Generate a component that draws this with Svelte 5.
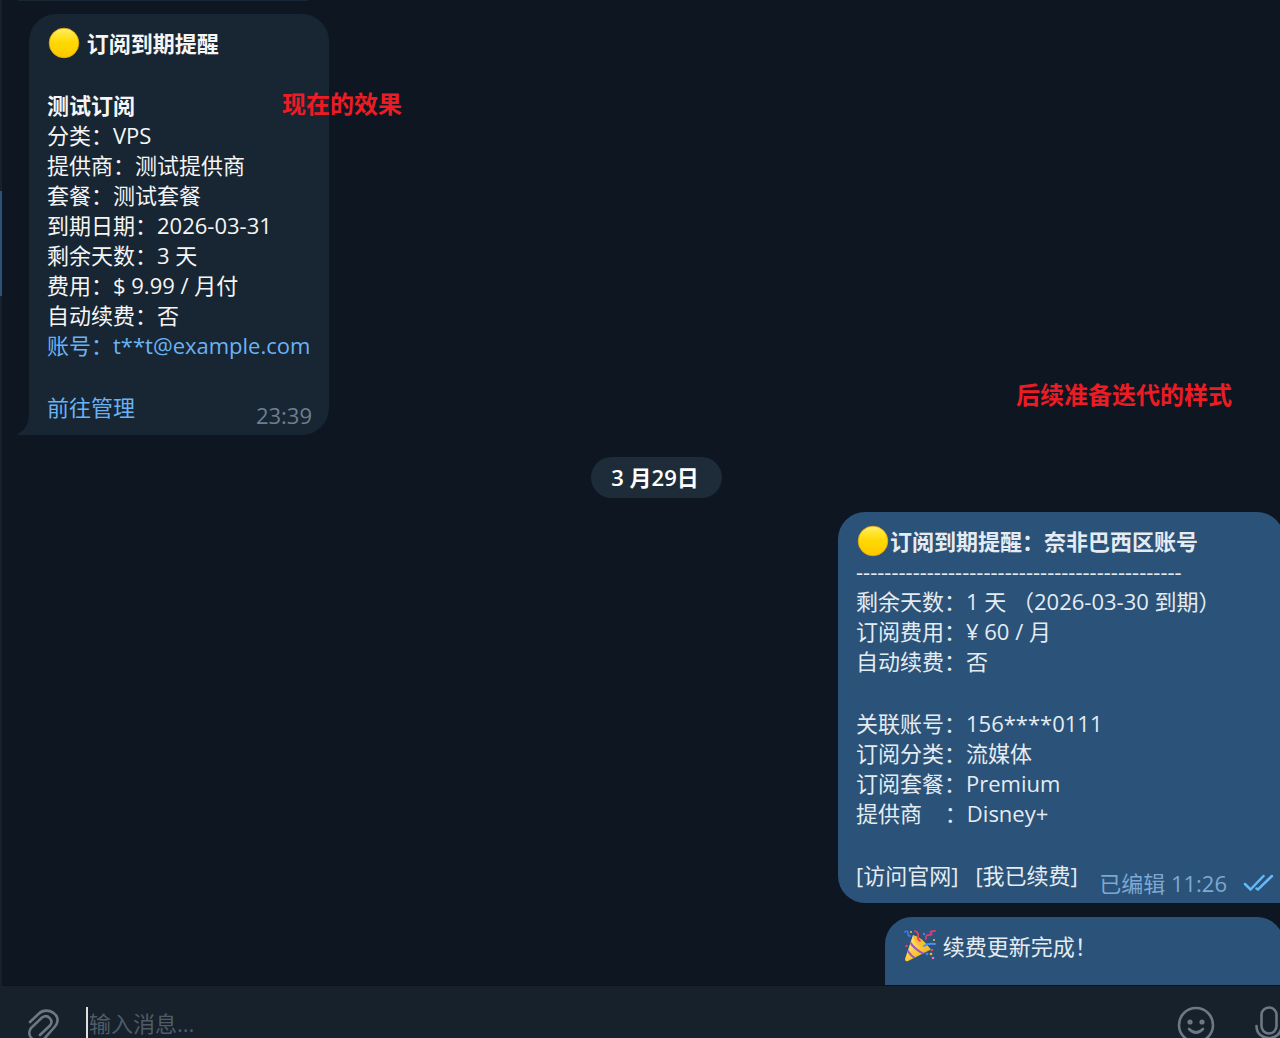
<script>
  const current = [
    '分类：VPS',
    '提供商：测试提供商',
    '套餐：测试套餐',
    '到期日期：2026-03-31',
    '剩余天数：3 天',
    '费用：$ 9.99 / 月付',
    '自动续费：否',
  ];

  const next = [
    ['剩余天数：1 天 （2026-03-30 到期）', '订阅费用：¥ 60 / 月', '自动续费：否'],
    ['关联账号：156****0111', '订阅分类：流媒体', '订阅套餐：Premium', '提供商    ：Disney+'],
  ];

  const divider = '-'.repeat(46);

  let message = $state('');
</script>

{#snippet yellowDot()}
  <svg class="emoji" viewBox="0 0 34 34" aria-hidden="true">
    <defs>
      <linearGradient id="dot" x1="0" y1="0" x2="0" y2="1">
        <stop offset="0" stop-color="#fff06e" />
        <stop offset="0.2" stop-color="#ffe536" />
        <stop offset="0.5" stop-color="#ffd800" />
        <stop offset="1" stop-color="#fec800" />
      </linearGradient>
    </defs>
    <circle cx="17" cy="17" r="14.8" fill="url(#dot)" stroke="#e9a70c" stroke-width="0.8" />
  </svg>
{/snippet}

<div class="screen">
  <div class="app">
    <aside class="edge"><div class="active"></div></aside>

    <main>
      <section class="chat">
        <div class="previous"></div>

        <article class="bubble in">
          <h2>{@render yellowDot()} 订阅到期提醒</h2>
          <div class="blank"></div>
          <h2>测试订阅</h2>
          {#each current as line}
            <p>{line}</p>
          {/each}
          <p><a href="#account">账号：t**t@example.com</a></p>
          <div class="blank"></div>
          <footer>
            <a href="#manage">前往管理</a>
            <time>23:39</time>
          </footer>
          <svg class="tail" viewBox="0 0 12 22" aria-hidden="true">
            <path d="M12 0v22H1c-1.200 0-1.200-1 0-1.700C8 16 11 10 11 0z" fill="#182533" />
          </svg>
        </article>

        <div class="date">3 月29日</div>

        <article class="bubble out">
          <h2>{@render yellowDot()}订阅到期提醒：奈非巴西区账号</h2>
          <p>{divider}</p>
          {#each next as group}
            {#each group as line}
              <p>{line}</p>
            {/each}
            <div class="blank"></div>
          {/each}
          <footer>
            <span class="actions">
              <a href="#site">[访问官网]</a>
              <a href="#renewed">[我已续费]</a>
            </span>
            <span class="meta">
              <time>已编辑 11:26</time>
              <svg class="ticks" viewBox="0 0 32 18" aria-hidden="true">
                <path d="M2 10l5.500 5.500L20.500 2M13.500 14.500l1.500 1L29 2" />
              </svg>
            </span>
          </footer>
        </article>

        <article class="bubble out short">
          <div>
            <svg class="emoji" viewBox="0 0 34 34" aria-hidden="true">
              <defs>
                <linearGradient id="cone" x1="0" y1="0" x2="1" y2="1">
                  <stop offset="0.2" stop-color="#ffe070" />
                  <stop offset="0.6" stop-color="#fbc52c" />
                  <stop offset="1" stop-color="#d58c1e" />
                </linearGradient>
                <clipPath id="hat"><path d="M10 6L2 30q0 3 3 2L28 20.500Q15 17 10 6z" /></clipPath>
              </defs>
              <path d="M10 6L2 30q0 3 3 2L28 20.500Q15 17 10 6z" fill="url(#cone)" />
              <path d="M10 6q7 2 11 6.500t7 8Q20 21 15 16T10 6z" fill="#f3bf35" />
              <g clip-path="url(#hat)" fill="none" stroke="#9a55c9" stroke-width="2.200">
                <path d="M7 13q4 7 14 12M4 21q4 6 9 9" />
              </g>
              <g fill="none" stroke-linecap="round" stroke-width="1.800">
                <path d="M12 2q4 2 3 5t2 5" stroke="#f23d5e" />
                <path d="M23 10q-1-4 3-4t2-2 4-2" stroke="#d93b78" />
                <path d="M21 17q4-3 11-2" stroke="#4c8df5" />
                <path d="M2 3q3-2 3 1t2 3" stroke="#3978ec" />
              </g>
              <circle cx="8" cy="3" r="1" fill="#f7c52d" />
              <circle cx="21" cy="5" r="1.200" fill="#3f84f4" />
              <circle cx="3.500" cy="17" r="1.200" fill="#ee3f6b" />
              <circle cx="29" cy="21" r="1.300" fill="#ee3f6b" />
              <circle cx="24" cy="25" r="1.300" fill="#3f84f4" />
              <circle cx="28" cy="25" r="1.300" fill="#f6b72a" />
              <circle cx="30" cy="29" r="1.300" fill="#e973b5" />
              <circle cx="31" cy="11" r="1" fill="#f7c52d" />
            </svg> 续费更新完成！
          </div>
        </article>
      </section>

      <form class="composer" onsubmit={(e) => e.preventDefault()}>
        <button type="button" aria-label="附件">
          <svg viewBox="0 0 38 38">
            <path d="M6 16L15 7.500c8-8 25 2 16 13L20 33C13 39 1 31 7 22L18 11.500c6-4 12 3 8 8L16 29" />
          </svg>
        </button>
        <input type="text" aria-label="输入消息" placeholder="输入消息..." bind:value={message} />
        <button type="button" aria-label="表情">
          <svg viewBox="0 0 38 38">
            <circle cx="19" cy="19" r="17" />
            <circle class="eye" cx="13" cy="16" r="2.600" />
            <circle class="eye" cx="25" cy="16" r="2.600" />
            <path d="M12 23q7 7 14 0" />
          </svg>
        </button>
        <button type="button" aria-label="语音">
          <svg viewBox="0 0 38 38">
            <rect x="11.500" y="1.500" width="15" height="26" rx="7.500" />
            <path d="M6.500 20c0 16 25 16 25 0M19 32v5" />
          </svg>
        </button>
      </form>
    </main>
  </div>

  <strong class="note now">现在的效果</strong>
  <strong class="note later">后续准备迭代的样式</strong>
</div>

<style>
  :global(body) {
    background: #0e1621;
  }

  .screen {
    position: relative;
    height: 100vh;
    overflow: hidden;
    color: #f5f5f5;
    font-family: 'Open Sans', 'Noto Sans CJK SC', sans-serif;
    font-size: 22px;
    line-height: 30px;
  }

  /* the window runs a little past the right and bottom of the view */
  .app {
    display: flex;
    width: calc(100% + 28px);
    height: calc(100% + 25px);
  }

  .edge {
    flex: none;
    width: 2px;
    padding-top: 191px;
    box-sizing: border-box;
    background: #17212b;
  }

  .active {
    height: 105px;
    background: #2b5278;
  }

  main {
    flex: 1;
    min-width: 0;
    display: flex;
    flex-direction: column;
  }

  .chat {
    flex: 1;
    min-height: 0;
    overflow: hidden;
    display: flex;
    flex-direction: column;
    gap: 14px;
    padding: 0 24px 0 27px;
    background: #0e1621;
  }

  .previous {
    flex: none;
    width: 290px;
    height: 1px;
    margin: 0 0 -1px -11px;
    background: #182533;
  }

  .bubble {
    flex: none;
    position: relative;
    box-sizing: border-box;
    padding: 14px 17px 13px 18px;
    border-radius: 27px;
  }

  .in {
    width: 300px;
    background: #182533;
    border-bottom-left-radius: 0;
  }

  .out {
    align-self: flex-end;
    width: 446px;
    padding-right: 9px;
    background: #2b5278;
    color: #e4ecf2;
    border-bottom-right-radius: 0;
  }

  .short {
    width: 399px;
    height: 100px;
  }

  h2,
  p {
    height: 30px;
    margin: 0;
    font-size: 22px;
    font-weight: 400;
    white-space: pre;
  }

  h2 {
    font-weight: 600;
  }

  .blank {
    height: 32px;
  }

  .emoji {
    width: 34px;
    height: 34px;
    margin: -6px 0 -4px;
    vertical-align: -4px;
  }

  a {
    color: #6ab3f3;
    text-decoration: none;
  }

  .out a {
    color: inherit;
  }

  footer {
    display: flex;
    justify-content: space-between;
    height: 30px;
  }

  .actions {
    display: flex;
    gap: 17px;
  }

  time {
    color: #6d7f8f;
  }

  .in time,
  .meta {
    margin-top: 8px;
  }

  .meta {
    display: flex;
    align-items: center;
    gap: 16px;
    height: 30px;
  }

  .meta time {
    color: #7da8d3;
  }

  .ticks {
    width: 32px;
    height: 18px;
    fill: none;
    stroke: #65b9f4;
    stroke-width: 2.5;
    stroke-linecap: round;
  }

  .tail {
    position: absolute;
    left: -11px;
    bottom: 0;
    width: 12px;
    height: 22px;
  }

  .date {
    flex: none;
    align-self: center;
    margin-top: 8px;
    padding: 5px 23px 6px 20px;
    border-radius: 21px;
    background: #1e2c3a;
    color: #fff;
    font-weight: 600;
  }

  .composer {
    flex: none;
    display: flex;
    align-items: center;
    height: 78px;
    box-sizing: border-box;
    padding: 0 20px 0 22px;
    border-top: 1px solid #0c131b;
    background: #17212b;
  }

  .composer button {
    flex: none;
    width: 38px;
    height: 38px;
    padding: 0;
    border: 0;
    background: none;
  }

  .composer button + button {
    margin-left: 35px;
  }

  .composer svg {
    display: block;
    fill: none;
    stroke: #6c7883;
    stroke-width: 2.6;
    stroke-linecap: round;
  }

  .composer .eye {
    fill: #6c7883;
    stroke: none;
  }

  input {
    flex: 1;
    min-width: 0;
    height: 32px;
    margin: 0 24px 4px;
    padding: 0 0 0 1px;
    border: 0;
    border-left: 2px solid #dfdfdf;
    outline: none;
    background: none;
    color: #f5f5f5;
    font: inherit;
  }

  input::placeholder {
    color: #4f5c68;
    opacity: 1;
  }

  .note {
    position: absolute;
    color: #ed1c24;
    font-size: 24px;
    font-weight: 700;
  }

  .now {
    top: 89px;
    left: 282px;
  }

  .later {
    top: 380px;
    right: 48px;
  }
</style>
